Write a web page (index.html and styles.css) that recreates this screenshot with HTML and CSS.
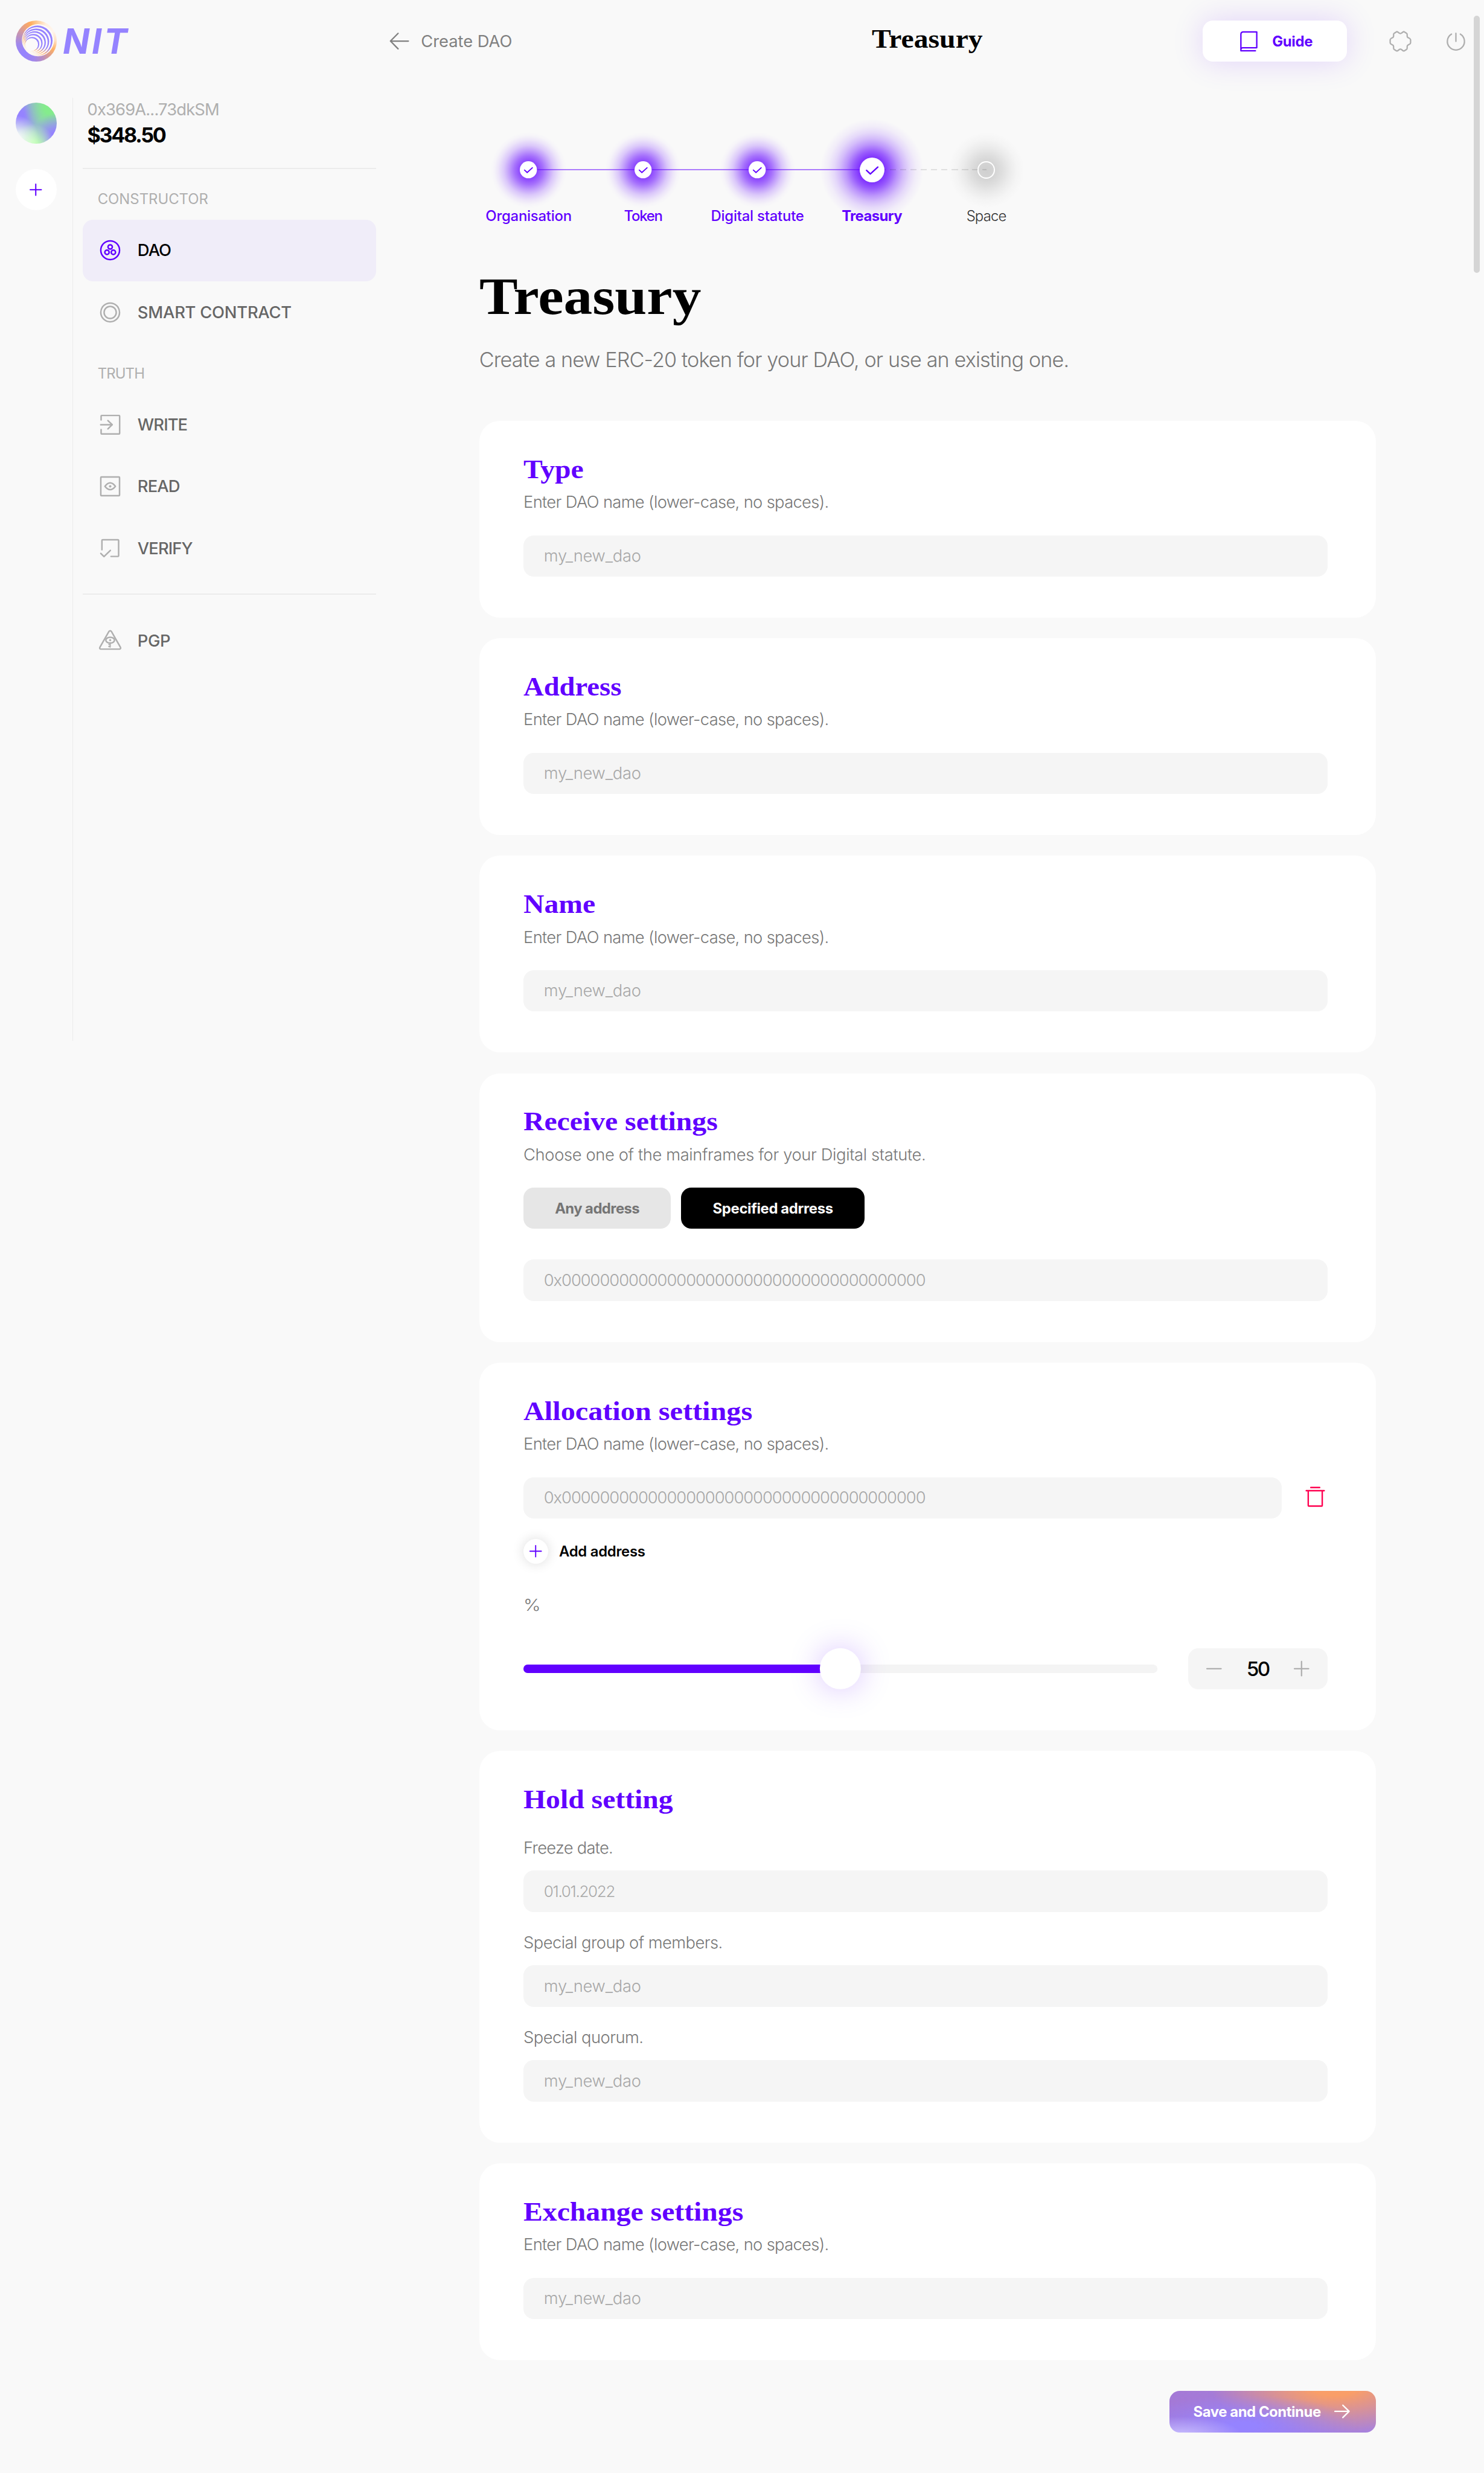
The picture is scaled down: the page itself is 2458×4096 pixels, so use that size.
FILE: index.html
```
<!DOCTYPE html>
<html lang="en">
<head>
<meta charset="utf-8">
<title>Treasury</title>
<link rel="stylesheet" href="styles.css">
</head>
<body>
<header class="header">
  <a class="logo">
    <span class="logo-mark">
      <svg viewBox="0 0 40 40">
        <defs>
          <linearGradient id="arc" x1=".8" y1=".1" x2=".2" y2=".9">
            <stop offset="0" stop-color="#9583ff"/><stop offset=".45" stop-color="#9583ff"/>
            <stop offset=".72" stop-color="#ffb066"/><stop offset="1" stop-color="#fff4e8"/>
          </linearGradient>
        </defs>
        <circle cx="21.6" cy="19.1" r="15.6" fill="#fcfafa"/>
        <g fill="url(#arc)">
          <circle cx="21.2" cy="19.5" r="14.6"/><circle cx="20.5" cy="20.1" r="13.6" fill="#fcfafa"/>
          <circle cx="19.9" cy="20.3" r="12.6"/><circle cx="19.3" cy="20.9" r="11.7" fill="#fcfafa"/>
          <circle cx="18.6" cy="21.1" r="10.7"/><circle cx="18" cy="21.6" r="9.9" fill="#fcfafa"/>
          <circle cx="17.3" cy="21.9" r="8.8"/><circle cx="16.8" cy="22.4" r="8" fill="#fcfafa"/>
          <circle cx="16" cy="22.8" r="6.9"/><circle cx="15.5" cy="23.3" r="6.2" fill="#fcfafa"/>
        </g>
      </svg>
    </span>
    <span class="logo-text">NIT</span>
  </a>
  <a class="back">
    <svg class="icon" viewBox="0 0 20 20"><path d="M9 2.5 1.6 10 9 17.5M1.6 10H19"/></svg>
    <span>Create DAO</span>
  </a>
  <div class="header-title"><span class="serif">Treasury</span></div>
  <div class="actions">
    <button class="guide">
      <svg class="icon" viewBox="0 0 24 24"><path d="M18.4 21.2H4.3V5a2.2 2.2 0 0 1 2.2-2.2h13.2v15.4H6a1.7 1.7 0 0 0-1.7 1.7"/></svg>
      <span>Guide</span>
    </button>
    <svg class="icon gear" viewBox="0 0 24 24"><path d="M12 4.5Q12.6 4.5 13.4 3.8L14.6 2.9Q15.3 2.4 16 2.9L17.9 4.1Q18.6 4.5 18.6 5.4V7Q18.6 8 19.5 8.4L21.1 9.3Q21.9 9.8 21.9 10.6V13.4Q21.9 14.2 21.1 14.7L19.5 15.6Q18.6 16 18.6 17V18.6Q18.6 19.5 17.9 19.9L16 21.1Q15.3 21.6 14.6 21.1L13.4 20.2Q12.6 19.6 12 19.6Q11.4 19.6 10.6 20.2L9.4 21.1Q8.7 21.6 8 21.1L6.1 19.9Q5.4 19.5 5.4 18.6V17Q5.4 16 4.5 15.6L2.9 14.7Q2.1 14.2 2.1 13.4V10.6Q2.1 9.8 2.9 9.3L4.5 8.4Q5.4 8 5.4 7V5.4Q5.4 4.5 6.1 4.1L8 2.9Q8.7 2.4 9.4 2.9L10.6 3.8Q11.4 4.5 12 4.5Z"/></svg>
    <svg class="icon" viewBox="0 0 24 24"><path d="M12 4.2V12M7.7 5A8.3 8.3 0 1 0 16.3 5"/></svg>
  </div>
</header>

<div class="layout">
  <aside class="rail">
    <span class="avatar"></span>
    <button class="rail-add"><svg class="icon" viewBox="0 0 12 12"><path d="M6 .6V11.4M.6 6H11.4"/></svg></button>
  </aside>

  <nav class="sidebar">
    <div class="wallet">
      <div class="wallet-address">0x369A...73dkSM</div>
      <div class="wallet-balance">$348.50</div>
    </div>
    <hr>
    <div class="nav-label constructor">CONSTRUCTOR</div>
    <a class="nav-item active"><svg class="icon" viewBox="0 0 24 24"><circle cx="12" cy="12" r="9.1"/><circle cx="12" cy="8.8" r="2.1"/><circle cx="8.9" cy="14" r="2.1"/><circle cx="15.1" cy="14" r="2.1"/></svg><span class="t-dao">DAO</span></a>
    <a class="nav-item"><svg class="icon" viewBox="0 0 24 24"><circle cx="12" cy="12" r="9.1"/><circle cx="12" cy="12" r="5.9"/></svg><span class="t-smart">SMART CONTRACT</span></a>
    <div class="nav-label truth">TRUTH</div>
    <a class="nav-item"><svg class="icon" viewBox="0 0 24 24"><path d="M3.2 7.3V3.6A.6.6 0 0 1 3.8 3H20.6a.6.6 0 0 1 .6.6V20.4a.6.6 0 0 1-.6.6H3.8a.6.6 0 0 1-.6-.6V16.7M2.8 12H14M9.8 8 14 12l-4.2 4"/></svg><span>WRITE</span></a>
    <a class="nav-item"><svg class="icon" viewBox="0 0 24 24"><rect x="2.9" y="2.9" width="18.2" height="18.2" rx=".6"/><path d="M6.9 12Q12 5.4 17.1 12Q12 18.6 6.9 12Z"/><circle class="dot" cx="12" cy="12" r="1.2"/></svg><span>READ</span></a>
    <a class="nav-item"><svg class="icon" viewBox="0 0 24 24"><path d="M4 13.2V4.2A.7.7 0 0 1 4.700 3.500H19.500a.7.7 0 0 1 .7.7V19a.7.7 0 0 1-.7.7H12.800M2.900 16.800 6 19.900 12.200 13.800"/></svg><span>VERIFY</span></a>
    <hr class="second">
    <a class="nav-item"><svg class="icon" viewBox="0 0 24 24"><path d="M10.8 2.900a1.400 1.400 0 0 1 2.400 0L22 18.300a1.100 1.100 0 0 1-1 1.700H3a1.100 1.100 0 0 1-1-1.700Z"/><ellipse cx="12" cy="11.300" rx="4.200" ry="2.800"/><circle class="dot" cx="12" cy="11.300" r="1"/><path d="M12 14.200V18M12 15.500H10.700M12 17.500H10.700" stroke-width="1.200"/></svg><span class="t-pgp">PGP</span></a>
  </nav>

  <main class="main">
    <ol class="steps">
      <li class="step done"><span class="dot-area"><svg viewBox="0 0 24 24"><circle cx="12" cy="12" r="12"/><path d="M6.600 12.400 10.300 15.900 17.600 9.200"/></svg></span><span class="step-label">Organisation</span></li>
      <li class="step done"><span class="dot-area"><svg viewBox="0 0 24 24"><circle cx="12" cy="12" r="12"/><path d="M6.600 12.400 10.300 15.900 17.600 9.200"/></svg></span><span class="step-label t-token">Token</span></li>
      <li class="step done"><span class="dot-area"><svg viewBox="0 0 24 24"><circle cx="12" cy="12" r="12"/><path d="M6.600 12.400 10.300 15.900 17.600 9.200"/></svg></span><span class="step-label">Digital statute</span></li>
      <li class="step current"><span class="dot-area"><svg viewBox="0 0 24 24"><circle cx="12" cy="12" r="12"/><path d="M6.600 12.400 10.300 15.900 17.600 9.200"/></svg></span><span class="step-label">Treasury</span></li>
      <li class="step next"><span class="dot-area"><i class="ring"></i></span><span class="step-label">Space</span></li>
    </ol>

    <h1><span class="serif">Treasury</span></h1>
    <p class="lead">Create a new ERC-20 token for your DAO, or use an existing one.</p>

    <form class="cards">
      <section class="card">
        <h2><span class="serif">Type</span></h2>
        <p class="hint">Enter DAO name (lower-case, no spaces).</p>
        <div class="field">my_new_dao</div>
      </section>
      <section class="card">
        <h2><span class="serif address">Address</span></h2>
        <p class="hint">Enter DAO name (lower-case, no spaces).</p>
        <div class="field">my_new_dao</div>
      </section>
      <section class="card">
        <h2><span class="serif">Name</span></h2>
        <p class="hint">Enter DAO name (lower-case, no spaces).</p>
        <div class="field">my_new_dao</div>
      </section>
      <section class="card">
        <h2><span class="serif">Receive settings</span></h2>
        <p class="hint choose">Choose one of the mainframes for your Digital statute.</p>
        <div class="toggle">
          <button type="button" class="any">Any address</button>
          <button type="button" class="specified">Specified adrress</button>
        </div>
        <div class="field zeros">0x00000000000000000000000000000000000000</div>
      </section>
      <section class="card">
        <h2><span class="serif wide">Allocation settings</span></h2>
        <p class="hint">Enter DAO name (lower-case, no spaces).</p>
        <div class="address-row">
          <div class="field zeros">0x00000000000000000000000000000000000000</div>
          <svg class="icon trash" viewBox="0 0 24 24"><path d="M7.700 2.200H16.300M3.300 5.300H20.700M5.200 5.300V19.600a.6.6 0 0 0 .6.6H18.200a.6.6 0 0 0 .6-.6V5.300"/></svg>
        </div>
        <div class="add-row">
          <span class="add-icon"><svg class="icon" viewBox="0 0 12 12"><path d="M6 .5V11.500M.5 6H11.500"/></svg></span>
          <span>Add address</span>
        </div>
        <p class="percent"><span>%</span></p>
        <div class="slider-row">
          <div class="track"><div class="fill" style="width:50%"></div><span class="thumb"></span></div>
          <div class="stepper">
            <svg class="icon" viewBox="0 0 15 15"><path d="M.6 7.500H14.400"/></svg>
            <span>50</span>
            <svg class="icon" viewBox="0 0 15 15"><path d="M.6 7.500H14.400M7.500 .6V14.400"/></svg>
          </div>
        </div>
      </section>
      <section class="card hold">
        <h2><span class="serif">Hold setting</span></h2>
        <div class="group"><p class="label freeze">Freeze date.</p><div class="field date">01.01.2022</div></div>
        <div class="group"><p class="label">Special group of members.</p><div class="field">my_new_dao</div></div>
        <div class="group"><p class="label">Special quorum.</p><div class="field">my_new_dao</div></div>
      </section>
      <section class="card">
        <h2><span class="serif">Exchange settings</span></h2>
        <p class="hint">Enter DAO name (lower-case, no spaces).</p>
        <div class="field">my_new_dao</div>
      </section>
      <button type="button" class="save">
        <span>Save and Continue</span>
        <svg class="icon" viewBox="0 0 15 14"><path d="M.6 7H14.400M8.300 1 14.400 7 8.300 13"/></svg>
      </button>
    </form>
  </main>
</div>
<div class="scrollbar"></div>
</body>
</html>
```
FILE: styles.css
```
/* 1rem = 10 units of the 1440-unit wide layout */
html { font-size: calc(100vw / 144); }
* { box-sizing: border-box; margin: 0; padding: 0; }
body {
  position: relative;
  height: 100vh;
  overflow: hidden;
  background: #f9f9f9;
  color: #000;
  font-family: Inter, "Liberation Sans", sans-serif;
  font-size: 1.6rem;
}
button { border: 0; font: inherit; color: inherit; background: none; }
svg { display: block; flex: none; overflow: visible; }
.icon { fill: none; stroke: #afafaf; stroke-width: 1.35; stroke-linecap: round; stroke-linejoin: round; width: 2.4rem; height: 2.4rem; }
.icon .dot { fill: #afafaf; stroke: none; }
.serif {
  display: block;
  font-family: "Liberation Serif", serif;
  font-weight: 700;
  transform: scaleX(1.1);
  transform-origin: left center;
  white-space: nowrap;
}

/* Header */
.header { display: grid; grid-template-columns: 37.8rem 46.8rem 1fr auto; align-items: center; height: 8rem; padding-right: 1.5rem; }
.logo { display: flex; align-items: center; gap: .6rem; padding-left: 1.5rem; }
.logo-mark {
  width: 4rem; height: 4rem; border-radius: 50%;
  background: conic-gradient(#ffc88f 0deg, #fff0e0 30deg, #fff6ee 60deg, #ffe0c0 90deg, #ffb266 115deg, #e0a08a 135deg, #b98ec4 160deg, #a085ee 190deg, #9583ff 225deg, #a088ec 260deg, #c896b0 295deg, #f0a478 325deg, #ffad5e 342deg, #ffc88f 360deg);
}
.logo-text { font-size: 3.4rem; font-style: italic; font-weight: 700; letter-spacing: .22rem; line-height: 4rem; color: #9583ff; }
.back { display: flex; align-items: center; gap: 1.15rem; color: #808080; letter-spacing: 0; }
.back .icon { width: 2rem; height: 2rem; margin-left: -.1rem; stroke: #808080; }
.header-title { font-size: 2.54rem; line-height: 3rem; margin-top: -.4rem; }
.actions { display: flex; align-items: center; }
.guide {
  display: flex; align-items: center; gap: 1.05rem;
  width: 14rem; height: 4rem; padding-left: 3.3rem; margin-right: 4rem;
  border-radius: 1rem; background: #fff; box-shadow: 0 0 3rem rgba(97, 0, 255, .16);
  color: #6100ff; font-size: 1.4rem; font-weight: 700; letter-spacing: -.02rem;
}
.guide .icon { stroke: #6100ff; }
.gear { margin-right: 3rem; }
.scrollbar { position: absolute; top: 1.5rem; right: .4rem; width: .6rem; height: 25rem; border-radius: .3rem; background: #d5d5d5; }

/* Left rail */
.layout { display: flex; align-items: flex-start; }
.rail { display: flex; flex-direction: column; gap: 2.45rem; width: 7.1rem; height: 91.5rem; margin-top: 1.5rem; padding: .45rem 0 0 1.5rem; border-right: .1rem solid #ececec; }
.avatar {
  width: 4rem; height: 4rem; border-radius: 50%;
  background:
    radial-gradient(circle at 2% 86%, #fff, rgba(255, 255, 255, 0) 42%),
    radial-gradient(circle at 42% 105%, #bdfcb4 0 10%, rgba(184, 250, 180, 0) 45%),
    radial-gradient(circle at 98% 84%, #9583ff 0 10%, rgba(149, 131, 255, 0) 45%),
    radial-gradient(circle at 85% 12%, #84ec8c 0 12%, rgba(132, 236, 140, 0) 52%),
    radial-gradient(circle at 8% 30%, #9583ff 0 10%, rgba(149, 131, 255, 0) 52%),
    #98c2cc;
}
.rail-add { display: grid; place-items: center; width: 4rem; height: 4rem; border-radius: 50%; background: #fff; }
.rail-add .icon { width: 1.2rem; height: 1.2rem; stroke: #6100ff; stroke-width: 1.2; }

/* Sidebar */
.sidebar { width: 28.5rem; margin-left: .9rem; }
.wallet { height: 8.3rem; padding: 1.65rem .47rem 0; }
.wallet-address { line-height: 2rem; letter-spacing: -.048rem; color: #afafaf; }
.wallet-balance { margin-top: .25rem; font-size: 2rem; font-weight: 700; line-height: 2.5rem; letter-spacing: -.135rem; }
hr { height: .1rem; border: 0; background: #ececec; }
hr.second { margin: 1.4rem 0 1.5rem; }
.nav-label { padding: 1.95rem 1.47rem .95rem; font-size: 1.4rem; line-height: 2rem; color: #afafaf; }
.truth { letter-spacing: -.05rem; }
.nav-item { display: flex; align-items: center; gap: 1.45rem; height: 6rem; padding-left: 1.5rem; border-radius: 1rem; color: #666; font-weight: 500; letter-spacing: -.052rem; }
.nav-item .icon { stroke-width: 1.45; }
.nav-item.active { background: #f0edf9; color: #000; }
.nav-item.active .icon { stroke: #6100ff; }
.t-smart { letter-spacing: -.012rem; }
.t-pgp { letter-spacing: -.02rem; }

/* Steps */
.main { width: 87rem; margin-left: 10rem; padding-top: 6.1rem; }
.steps { display: flex; margin-left: -.75rem; list-style: none; }
.step { position: relative; display: flex; flex-direction: column; align-items: center; gap: 1.1rem; width: 11.1rem; font-size: 1.4rem; font-weight: 500; letter-spacing: -.012rem; color: #6100ff; }
.dot-area { position: relative; display: grid; place-items: center; width: 100%; height: 4.8rem; }
.dot-area::before {
  content: ""; position: absolute; left: 50%; top: 50%; width: 7.4rem; height: 7.4rem; transform: translate(-50%, -50%);
  background: radial-gradient(closest-side, rgba(97, 0, 255, .82), rgba(97, 0, 255, .72) 22%, rgba(97, 0, 255, .55) 38%, rgba(97, 0, 255, .36) 52%, rgba(97, 0, 255, .2) 65%, rgba(97, 0, 255, .08) 80%, rgba(97, 0, 255, .02) 91%, rgba(97, 0, 255, 0));
}
.current .dot-area::before {
  width: 10rem; height: 10rem;
  background: radial-gradient(closest-side, rgba(97, 0, 255, .9), rgba(97, 0, 255, .8) 24%, rgba(97, 0, 255, .64) 36%, rgba(97, 0, 255, .4) 50%, rgba(97, 0, 255, .24) 62%, rgba(97, 0, 255, .13) 73%, rgba(97, 0, 255, .05) 85%, rgba(97, 0, 255, 0));
}
.next .dot-area::before {
  background: radial-gradient(closest-side, rgba(0, 0, 0, .17), rgba(0, 0, 0, .15) 22%, rgba(0, 0, 0, .11) 40%, rgba(0, 0, 0, .06) 60%, rgba(0, 0, 0, .02) 80%, rgba(0, 0, 0, 0));
}
.dot-area::after { content: ""; position: absolute; z-index: 1; left: 50%; top: 2.3rem; width: 11.1rem; height: .1rem; background: rgba(97, 0, 255, .5); }
.current .dot-area::after { background: repeating-linear-gradient(90deg, rgba(0, 0, 0, .1) 0 .6rem, transparent .6rem 1rem) -.25rem 0 / 12rem 100% no-repeat; }
.next .dot-area::after { display: none; }
.dot-area svg { position: relative; z-index: 2; width: 1.66rem; height: 1.66rem; }
.current .dot-area svg { width: 2.4rem; height: 2.4rem; }
.dot-area circle { fill: #fff; }
.dot-area path { fill: none; stroke: #6100ff; stroke-width: 1.6; stroke-linecap: round; stroke-linejoin: round; }
.current .dot-area path { stroke-width: 1.4; }
.ring { position: relative; z-index: 2; width: 1.66rem; height: 1.66rem; border: .15rem solid #fff; border-radius: 50%; }
.step-label { position: relative; z-index: 2; line-height: 2rem; white-space: nowrap; }
.t-token { letter-spacing: -.07rem; }
.current .step-label { font-weight: 700; letter-spacing: -.036rem; }
.next .step-label { font-weight: 300; letter-spacing: -.05rem; color: #333; }

/* Page heading */
h1 { margin-top: 3.8rem; font-size: 5.08rem; line-height: 6rem; }
.lead { margin-top: 1.95rem; font-size: 2rem; font-weight: 300; line-height: 2.4rem; letter-spacing: -.05rem; color: #787878; }

/* Cards */
.cards { display: flex; flex-direction: column; gap: 2rem; margin-top: 4.7rem; }
.card { padding: 3.2rem 4.7rem 4rem 4.3rem; border-radius: 2rem; background: #fff; }
h2 { font-size: 2.54rem; line-height: 3rem; color: #6100ff; }
h2 .address { transform: scaleX(1.075); }
h2 .wide { transform: scaleX(1.113); }
.hint, .label, .percent { font-weight: 300; line-height: 2rem; letter-spacing: -.038rem; color: #787878; }
.percent span { display: inline-block; transform: scaleX(1.12); transform-origin: left center; }
.hint { margin: .72rem 0 2.18rem; }
.choose { letter-spacing: -.021rem; }
.field { display: flex; align-items: center; height: 4rem; padding-left: 1.97rem; border-radius: 1rem; background: #f5f5f5; font-weight: 300; letter-spacing: -.012rem; color: #a8a8a8; }
.zeros { letter-spacing: -.059rem; }
.date { font-size: 1.52rem; letter-spacing: -.075rem; }
.toggle { display: flex; gap: 1rem; margin-bottom: 3rem; }
.toggle button { height: 4rem; border-radius: 1rem; font-size: 1.4rem; font-weight: 700; }
.toggle .any { width: 14.3rem; background: #e6e6e6; color: #757575; letter-spacing: -.034rem; }
.toggle .specified { width: 17.8rem; background: #000; color: #fff; letter-spacing: -.022rem; }
.address-row { display: flex; align-items: center; gap: 2rem; }
.address-row .field { flex: 1; }
.trash { stroke: #ff0050; stroke-width: 1.4; }
.add-row { display: flex; align-items: center; gap: 1.05rem; margin: 2rem 0 3.08rem; font-size: 1.4rem; font-weight: 600; letter-spacing: -.016rem; }
.add-icon { display: grid; place-items: center; width: 2.4rem; height: 2.4rem; border-radius: 50%; background: #fff; box-shadow: 0 0 1.2rem rgba(0, 0, 0, .14); }
.add-icon .icon { width: 1.2rem; height: 1.2rem; stroke: #6100ff; stroke-width: 1.1; }
.slider-row { display: flex; align-items: center; gap: 3rem; height: 4rem; margin-top: 3.12rem; }
.track { position: relative; flex: 1; height: .8rem; border-radius: .4rem; background: #f4f4f4; }
.fill { height: 100%; border-radius: .4rem 0 0 .4rem; background: #6100ff; }
.thumb { position: absolute; left: 50%; top: 50%; width: 4rem; height: 4rem; transform: translate(-50%, -50%); border-radius: 50%; background: #fff; box-shadow: 0 0 3rem rgba(97, 0, 255, .25); }
.stepper { display: flex; align-items: center; justify-content: space-between; width: 13.5rem; height: 4rem; padding: 0 1.75rem; border-radius: 1rem; background: #f5f5f5; font-size: 1.95rem; font-weight: 500; letter-spacing: -.15rem; }
.stepper .icon { width: 1.5rem; height: 1.5rem; }
.hold .group { margin-top: 2.02rem; }
.hold h2 + .group { margin-top: 2.22rem; }
.label { margin-bottom: 1.18rem; letter-spacing: -.031rem; }
.freeze { letter-spacing: -.042rem; }

/* Submit */
.save {
  display: flex; align-items: center; gap: 1.3rem; align-self: flex-end;
  width: 20rem; height: 4rem; margin-top: 1rem; padding-left: 2.3rem; border-radius: 1rem;
  color: #fff; font-size: 1.4rem; font-weight: 700; letter-spacing: -.026rem;
  background:
    radial-gradient(6rem 1.8rem at 5% 106%, #c8beff, rgba(200, 190, 255, 0)),
    radial-gradient(11rem 3rem at 36% 84%, #9583ff 12%, rgba(149, 131, 255, 0)),
    radial-gradient(12rem 4.4rem at 80% -8%, #f99e68 18%, rgba(249, 158, 104, 0)),
    linear-gradient(90deg, #a479d6, #a882dc);
}
.save .icon { width: 1.5rem; height: 1.4rem; stroke: #fff; }
```
